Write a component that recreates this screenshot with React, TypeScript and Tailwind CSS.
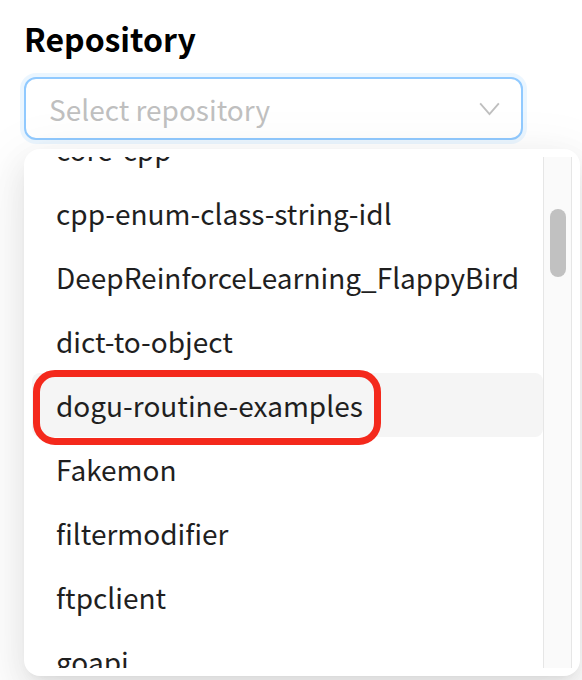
const repos = [
  'core-cpp',
  'cpp-enum-class-string-idl',
  'DeepReinforceLearning_FlappyBird',
  'dict-to-object',
  'dogu-routine-examples',
  'Fakemon',
  'filtermodifier',
  'ftpclient',
  'goapi',
]

const selected = 'dogu-routine-examples'

export default function App() {
  return (
    <div className="min-h-screen bg-white pl-6 pt-[18px] font-['Noto_Sans_CJK_KR',sans-serif] text-[#1f1f1f]">
      <h2 className="text-[32px] font-bold leading-[40px] text-black">Repository</h2>

      {/* Select trigger (focused) */}
      <div className="mt-[19px] flex h-[63px] w-[499px] items-center justify-between rounded-[12px] border-2 border-[#91caff] bg-white pl-[23px] pr-[21px] shadow-[0_0_0_4px_rgba(5,145,255,0.08)]">
        <span className="text-[28px] leading-[40px] text-[#bfbfbf]">Select repository</span>
        <svg viewBox="0 0 22 15" className="h-[14px] w-[21px]" fill="none" stroke="#bfbfbf" strokeWidth="2">
          <path d="M1 1.5 L11 13 L21 1.5" />
        </svg>
      </div>

      {/* Dropdown */}
      <div className="mt-[9px] flex h-[527px] w-[556px] rounded-[16px] bg-white p-2 shadow-[0_12px_32px_0_rgba(0,0,0,0.08),0_6px_12px_-8px_rgba(0,0,0,0.12),0_18px_56px_16px_rgba(0,0,0,0.05)]">
        <div className="flex-1 overflow-hidden">
          <ul className="-mt-[40px]">
            {repos.map((name) => (
              <li
                key={name}
                className={
                  name === selected
                    ? 'relative h-16 rounded-[8px] bg-[#f5f5f5] pl-6 text-[28px] leading-[64px]'
                    : 'h-16 pl-6 text-[28px] leading-[64px]'
                }
              >
                {name}
                {name === selected && (
                  <span className="pointer-events-none absolute left-px top-[-3px] h-[75px] w-[348px] rounded-[22px] border-[7px] border-[#f4291c]" />
                )}
              </li>
            ))}
          </ul>
        </div>
        {/* Scrollbar */}
        <div className="w-[29px] border-x border-[#e6e6e6] bg-[#fafafa] pl-[6px] pt-[52px]">
          <div className="h-[68px] w-[16px] rounded-full bg-[#c1c1c1]" />
        </div>
      </div>
    </div>
  )
}
